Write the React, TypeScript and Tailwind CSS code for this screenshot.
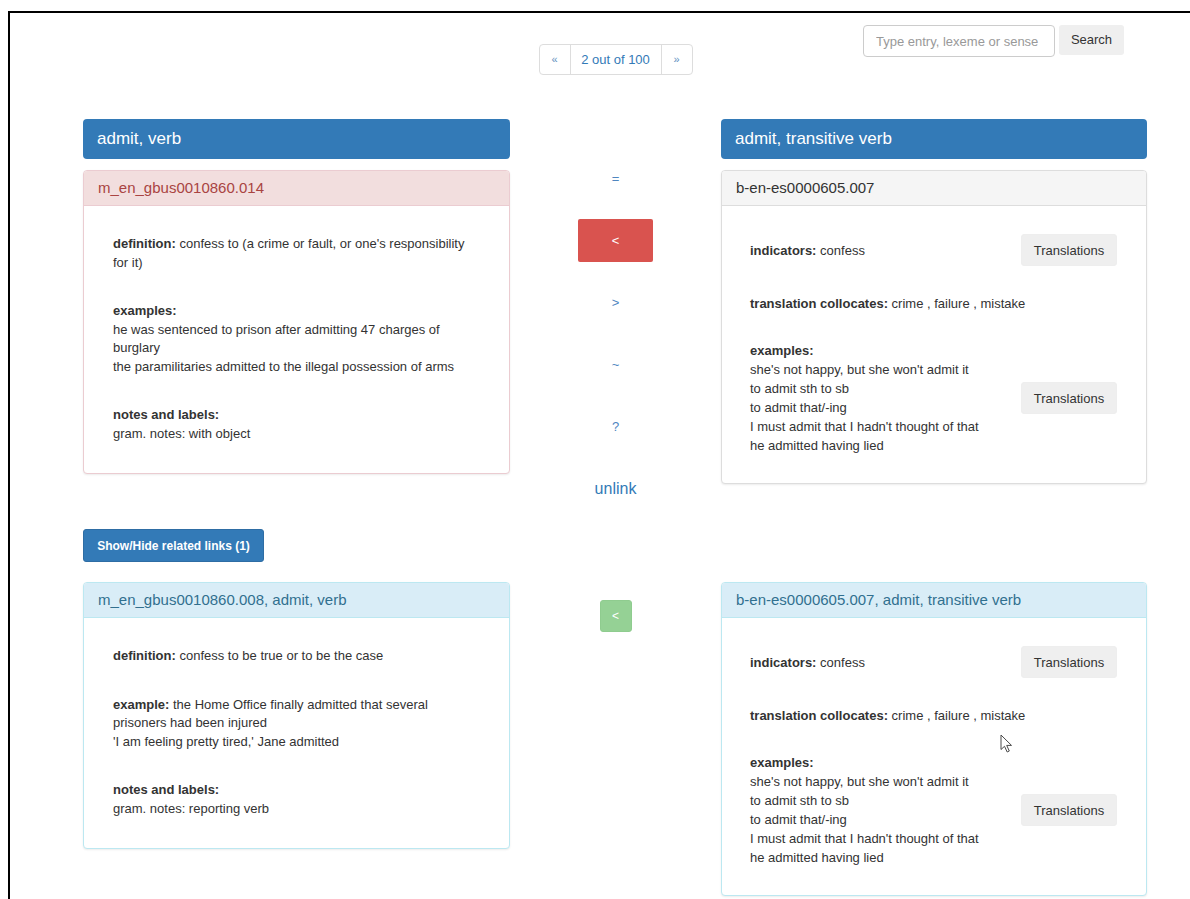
import React from "react";

// Sense-linking screen: a source sense on the left, a bilingual sense on the right,
// the link-type buttons between them, and the related links below.

type Tone = "danger" | "default" | "info";

const panelBorder: Record<Tone, string> = {
  danger: "border-[#ebccd1]",
  default: "border-[#dddddd]",
  info: "border-[#bce8f1]",
};

const headTone: Record<Tone, string> = {
  danger: "bg-[#f2dede] border-[#ebccd1] text-[#a94442]",
  default: "bg-[#f5f5f5] border-[#dddddd] text-[#333333]",
  info: "bg-[#d9edf7] border-[#bce8f1] text-[#31708f]",
};

const Panel = ({
  tone,
  title,
  children,
}: {
  tone: Tone;
  title: string;
  children: React.ReactNode;
}) => (
  <div
    className={`relative rounded-[4px] border bg-white shadow-[0_1px_2px_rgba(0,0,0,0.08)] ${panelBorder[tone]}`}
  >
    <div
      className={`flex h-[35px] items-center rounded-t-[3px] border-b px-[14px] text-[15px] ${headTone[tone]}`}
    >
      {title}
    </div>
    {children}
  </div>
);

const EntryBar = ({ label }: { label: string }) => (
  <div className="flex h-[40px] items-center rounded-[4px] bg-[#337ab7] px-[14px] text-[17px] text-white">
    {label}
  </div>
);

const TranslationsButton = () => (
  <button className="h-[32px] w-[96px] shrink-0 rounded-[3px] border border-[#eeeeee] bg-[#efefef] text-[13px] text-[#333333]">
    Translations
  </button>
);

// --- Monolingual sense body ---
const SenseBody = ({
  definition,
  exampleLabel,
  examples,
  notes,
}: {
  definition: string;
  exampleLabel: "examples" | "example";
  examples: string[];
  notes: string;
}) => (
  <div className="flex flex-col gap-[30px] px-[29px] pt-[29px] pb-[30px] text-[13px] leading-[18.5px] text-[#333333]">
    <div>
      <b>definition:</b> {definition}
    </div>
    {exampleLabel === "examples" ? (
      <div>
        <b>examples:</b>
        {examples.map((e) => (
          <div key={e}>{e}</div>
        ))}
      </div>
    ) : (
      <div>
        <b>example:</b> {examples[0]}
        {examples.slice(1).map((e) => (
          <div key={e}>{e}</div>
        ))}
      </div>
    )}
    <div>
      <b>notes and labels:</b>
      <div>{notes}</div>
    </div>
  </div>
);

const bilingualExamples = [
  "she's not happy, but she won't admit it",
  "to admit sth to sb",
  "to admit that/-ing",
  "I must admit that I hadn't thought of that",
  "he admitted having lied",
];

// --- Bilingual sense body ---
const BilingualBody = () => (
  <div className="flex flex-col gap-[28px] pt-[28px] pb-[28px] pl-[28px] pr-[29px] text-[13px] leading-[19px] text-[#333333]">
    <div className="flex items-center justify-between">
      <div>
        <b>indicators:</b> confess
      </div>
      <TranslationsButton />
    </div>
    <div>
      <b>translation collocates:</b> crime , failure , mistake
    </div>
    <div className="flex items-center justify-between">
      <div>
        <b>examples:</b>
        {bilingualExamples.map((e) => (
          <div key={e}>{e}</div>
        ))}
      </div>
      <TranslationsButton />
    </div>
  </div>
);

const linkTypes = ["=", "<", ">", "~", "?", "unlink"];

const Pointer = () => (
  <svg
    className="absolute left-[278px] top-[151px]"
    width="13"
    height="19"
    viewBox="0 0 13 19"
  >
    <path
      d="M1 1 L1 15.5 L4.5 12.3 L7.2 18 L9.3 17 L6.7 11.4 L11.5 11.4 Z"
      fill="#ffffff"
      stroke="#4a4a4a"
      strokeWidth="1"
      strokeLinejoin="round"
    />
  </svg>
);

export default function App() {
  const selected = "<";

  return (
    <div className="min-h-[899px] bg-white font-['Liberation_Sans',Arial,sans-serif]">
      <div className="ml-[8px] mt-[11px] min-h-[888px] border-l-2 border-t-2 border-black">
        <div className="ml-[73px] w-[1064px]">
          {/* top bar: pager and search */}
          <div className="grid h-[106px] grid-cols-[427px_211px_426px]">
            <div />
            <div className="flex justify-center pt-[31px]">
              <div className="flex h-[31px] overflow-hidden rounded-[4px] border border-[#dddddd] text-[#337ab7]">
                <div className="flex w-[31px] items-center justify-center border-r border-[#dddddd] text-[11px] text-[#5f8fc0]">
                  «
                </div>
                <div className="flex w-[91px] items-center justify-center border-r border-[#dddddd] text-[13px]">
                  2 out of 100
                </div>
                <div className="flex w-[30px] items-center justify-center text-[11px] text-[#5f8fc0]">
                  »
                </div>
              </div>
            </div>
            <div className="flex justify-end gap-[4px] pt-[12px] pr-[23px]">
              <input
                className="h-[32px] w-[192px] rounded-[4px] border border-[#cccccc] px-[12px] text-[13px] text-[#333333] outline-none placeholder:text-[#999999]"
                placeholder="Type entry, lexeme or sense"
              />
              <button className="h-[30px] w-[65px] rounded-[3px] bg-[#efefef] text-[13px] text-[#333333]">
                Search
              </button>
            </div>
          </div>

          {/* main link row */}
          <div className="grid grid-cols-[427px_211px_426px] items-start">
            <div>
              <EntryBar label="admit, verb" />
              <div className="mt-[11px]">
                <Panel tone="danger" title="m_en_gbus0010860.014">
                  <SenseBody
                    definition="confess to (a crime or fault, or one's responsibility for it)"
                    exampleLabel="examples"
                    examples={[
                      "he was sentenced to prison after admitting 47 charges of burglary",
                      "the paramilitaries admitted to the illegal possession of arms",
                    ]}
                    notes="gram. notes: with object"
                  />
                </Panel>
              </div>
            </div>

            <div className="flex flex-col items-center gap-[19px] pt-[38px]">
              {linkTypes.map((t) => (
                <button
                  key={t}
                  className={
                    t === selected
                      ? "flex h-[43px] w-[75px] items-center justify-center rounded-[2px] bg-[#d9534f] text-[13px] text-white"
                      : t === "unlink"
                        ? "flex h-[43px] w-[75px] items-center justify-center text-[16px] text-[#337ab7]"
                        : "flex h-[43px] w-[75px] items-center justify-center text-[13px] text-[#4f86bf]"
                  }
                >
                  {t}
                </button>
              ))}
            </div>

            <div>
              <EntryBar label="admit, transitive verb" />
              <div className="mt-[11px]">
                <Panel tone="default" title="b-en-es0000605.007">
                  <BilingualBody />
                </Panel>
              </div>
            </div>
          </div>

          <button className="mt-[19px] h-[33px] w-[181px] rounded-[3px] border border-[#2e6da4] bg-[#337ab7] text-[12px] font-bold text-white">
            Show/Hide related links (1)
          </button>

          {/* related links */}
          <div className="mt-[20px] grid grid-cols-[427px_211px_426px] items-start">
            <Panel tone="info" title="m_en_gbus0010860.008, admit, verb">
              <SenseBody
                definition="confess to be true or to be the case"
                exampleLabel="example"
                examples={[
                  "the Home Office finally admitted that several prisoners had been injured",
                  "'I am feeling pretty tired,' Jane admitted",
                ]}
                notes="gram. notes: reporting verb"
              />
            </Panel>

            <div className="flex justify-center pt-[18px]">
              <button className="flex h-[32px] w-[32px] items-center justify-center rounded-[3px] border border-[#8fcc8f] bg-[#95d195] text-[12px] text-white">
                &lt;
              </button>
            </div>

            <Panel tone="info" title="b-en-es0000605.007, admit, transitive verb">
              <BilingualBody />
              <Pointer />
            </Panel>
          </div>
        </div>
      </div>
    </div>
  );
}
